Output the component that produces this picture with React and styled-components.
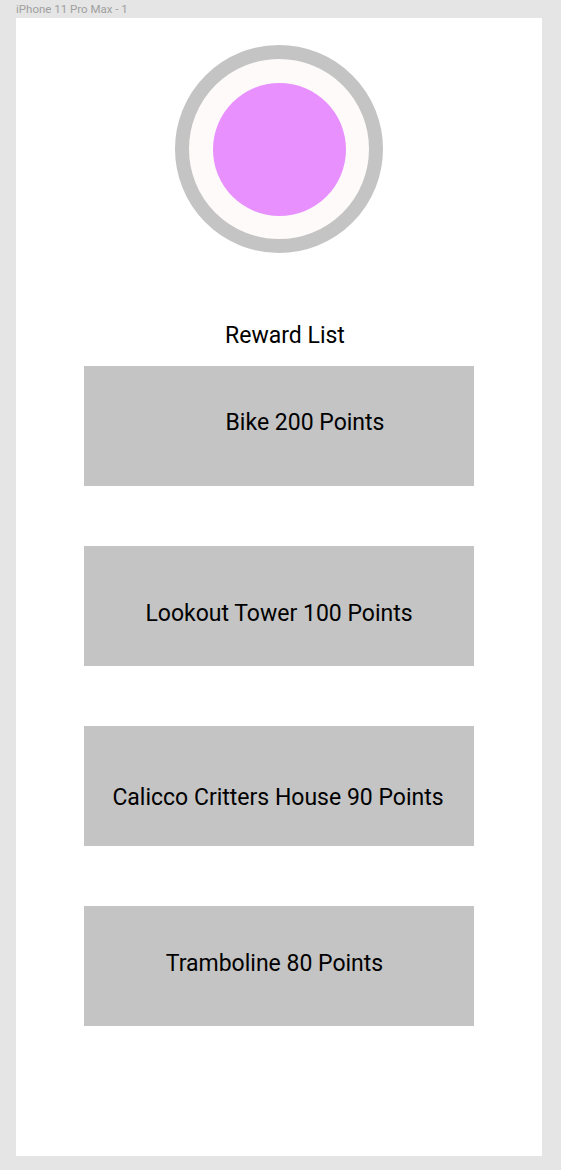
import React from "react";
import styled, { createGlobalStyle } from "styled-components";

const Global = createGlobalStyle`
  html, body { margin: 0; padding: 0; background: #e5e5e5; }
  body { font-family: Roboto, "Liberation Sans", sans-serif; }
`;

const Canvas = styled.div`
  width: 561px;
  height: 1170px;
  background: #e5e5e5;
  padding: 0 0 0 16px;
  box-sizing: border-box;
  display: flex;
  flex-direction: column;
`;

const FrameLabel = styled.div`
  font-family: Roboto, "Liberation Sans", sans-serif;
  font-size: 11.5px;
  line-height: 18px;
  height: 18px;
  color: #a0a0a0;
`;

const Frame = styled.main`
  width: 526px;
  height: 1138px;
  background: #ffffff;
  display: flex;
  flex-direction: column;
  align-items: center;
  padding-top: 27px;
  box-sizing: border-box;
`;

const Ring = styled.div`
  width: 208px;
  height: 208px;
  border-radius: 50%;
  border: 14px solid #c4c4c4;
  background: #fffafa;
  box-sizing: border-box;
  display: flex;
  align-items: center;
  justify-content: center;
`;

const Dot = styled.div`
  width: 133px;
  height: 133px;
  border-radius: 50%;
  background: #e891fe;
`;

const Title = styled.h1`
  margin: 69px 0 0 12px;
  font-weight: 400;
  font-size: 23px;
  line-height: 28px;
  color: #000;
`;

const List = styled.div`
  margin-top: 16px;
  display: flex;
  flex-direction: column;
  gap: 60px;
`;

const Card = styled.div`
  width: 390px;
  height: 120px;
  background: #c4c4c4;
  display: flex;
  align-items: center;
  justify-content: center;
`;

const Label = styled.span`
  font-size: 23px;
  line-height: 28px;
  color: #000;
  white-space: nowrap;
  margin-left: ${(p) => (p.$dx > 0 ? p.$dx * 2 : 0)}px;
  margin-right: ${(p) => (p.$dx < 0 ? -p.$dx * 2 : 0)}px;
  margin-top: ${(p) => (p.$dy > 0 ? p.$dy * 2 : 0)}px;
  margin-bottom: ${(p) => (p.$dy < 0 ? -p.$dy * 2 : 0)}px;
`;

const rewards = [
  { name: "Bike 200 Points", dx: 26, dy: -3.5 },
  { name: "Lookout Tower 100 Points", dx: 0, dy: 8 },
  { name: "Calicco Critters House 90 Points", dx: -1, dy: 12 },
  { name: "Tramboline 80 Points", dx: -4.5, dy: -2 },
];

export default function App() {
  return (
    <>
      <Global />
      <Canvas>
        <FrameLabel>iPhone 11 Pro Max - 1</FrameLabel>
        <Frame>
          <Ring>
            <Dot />
          </Ring>
          <Title>Reward List</Title>
          <List>
            {rewards.map((r) => (
              <Card key={r.name}>
                <Label $dx={r.dx} $dy={r.dy}>{r.name}</Label>
              </Card>
            ))}
          </List>
        </Frame>
      </Canvas>
    </>
  );
}
